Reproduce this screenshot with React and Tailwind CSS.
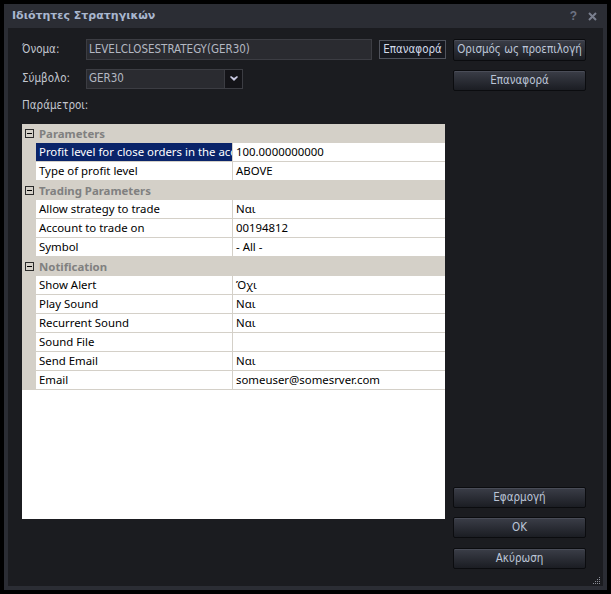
import React from "react";

const dark = { fontFamily: '"DejaVu Sans Condensed", "Liberation Sans", sans-serif', fontSize: "11.5px" };
const grid = { fontFamily: '"Noto Sans", "Open Sans", sans-serif', fontSize: "11.4px" };

function BigButton({ children, className = "" }) {
  return (
    <div
      className={
        "w-[133px] flex items-center justify-center border border-[#0b0c0f] rounded-[2px] bg-gradient-to-b from-[#3b3e48] to-[#1b1d23] text-[#bcc5d7] shadow-[inset_0_1px_0_#4a4d58] whitespace-nowrap " +
        className
      }
      style={dark}
    >
      {children}
    </div>
  );
}

function Minus() {
  return (
    <svg width="9" height="9" viewBox="0 0 9 9" className="block">
      <rect x="0.5" y="0.5" width="8" height="8" fill="none" stroke="#2b2b2b" />
      <line x1="2" y1="4.5" x2="7" y2="4.5" stroke="#000" />
    </svg>
  );
}

function Category({ label }) {
  return (
    <div className="h-[19px] flex items-center bg-[#d4d0c8]">
      <div className="w-[14px] flex justify-center pl-[1px]">
        <Minus />
      </div>
      <div className="pl-[3px] font-bold text-[#808080]">{label}</div>
    </div>
  );
}

function Row({ name, value, selected }) {
  return (
    <div className="h-[19px] flex">
      <div className="w-[14px] bg-[#d4d0c8]" />
      <div
        className={
          "w-[197px] border-r border-b border-[#d4d0c8] pl-[3px] flex items-center overflow-hidden whitespace-nowrap " +
          (selected ? "bg-[#0a246a] text-white" : "text-black")
        }
      >
        {name}
      </div>
      <div className="flex-1 border-b border-[#d4d0c8] pl-[3px] flex items-center whitespace-nowrap text-black">
        {value}
      </div>
    </div>
  );
}

export default function App() {
  return (
    <div className="relative w-[611px] h-[594px] bg-black p-[4px]">
      <div className="h-full bg-[#2b2d34] px-[4px] pb-[4px] flex flex-col">
        <div className="h-[24px] flex items-center pl-[4px] pr-[6px]">
          <div
            className="font-bold text-[#a9b7cf]"
            style={{ fontFamily: '"DejaVu Sans", sans-serif', fontSize: "11px" }}
          >
            Ιδιότητες Στρατηγικών
          </div>
          <div className="ml-auto flex items-center gap-[11px] text-[#6d7282] text-[12px] font-bold" style={{ fontFamily: '"Liberation Sans", sans-serif' }}>
            <span>?</span>
            <svg width="9" height="9" viewBox="0 0 9 9">
              <path d="M1 1 L8 8 M8 1 L1 8" stroke="#7a7f8e" strokeWidth="2" />
            </svg>
          </div>
        </div>
        <div className="flex-1 bg-[#1b1c20] flex pl-[14px] pr-[17px] pt-[11px] pb-[17px]">
          <div className="w-[424px] flex flex-col">
            <div className="h-[21px] flex items-center">
              <div className="w-[64px] text-[#c2c6cf]" style={dark}>Όνομα:</div>
              <div
                className="w-[286px] h-[21px] bg-[#2a2b30] border border-[#3c3d43] flex items-center pl-[2px] text-[#b4b8c2]"
                style={dark}
              >
                LEVELCLOSESTRATEGY(GER30)
              </div>
              <div
                className="ml-[7px] w-[67px] h-[19px] bg-[#171920] border border-[#50535c] flex items-center justify-center text-[#d3dbea] whitespace-nowrap"
                style={dark}
              >
                Επαναφορά
              </div>
            </div>
            <div className="h-[20px] mt-[9px] flex items-center">
              <div className="w-[64px] text-[#c2c6cf]" style={dark}>Σύμβολο:</div>
              <div className="w-[157px] h-[20px] bg-[#2a2b30] border border-[#3c3d43] flex items-center">
                <div className="flex-1 pl-[2px] text-[#b4b8c2]" style={dark}>GER30</div>
                <div className="w-[18px] h-[18px] bg-[#141418] border-l border-[#3c3d43] flex items-center justify-center">
                  <svg width="8" height="6" viewBox="0 0 8 6">
                    <path d="M0 1 L1 0 L4 2 L7 0 L8 1 L4 5 Z" fill="#c9c9e2" />
                  </svg>
                </div>
              </div>
            </div>
            <div className="h-[18px] mt-[8px] flex items-center text-[#c2c6cf]" style={dark}>
              Παράμετροι:
            </div>
            <div className="mt-[9px] w-[423px] h-[395px] bg-white flex flex-col" style={grid}>
              <Category label="Parameters" />
              <Row name="Profit level for close orders in the account" value="100.0000000000" selected />
              <Row name="Type of profit level" value="ABOVE" />
              <Category label="Trading Parameters" />
              <Row name="Allow strategy to trade" value="Ναι" />
              <Row name="Account to trade on" value="00194812" />
              <Row name="Symbol" value="- All -" />
              <Category label="Notification" />
              <Row name="Show Alert" value="Όχι" />
              <Row name="Play Sound" value="Ναι" />
              <Row name="Recurrent Sound" value="Ναι" />
              <Row name="Sound File" value="" />
              <Row name="Send Email" value="Ναι" />
              <Row name="Email" value="someuser@somesrver.com" />
            </div>
          </div>
          <div className="ml-[7px] flex flex-col">
            <BigButton className="h-[22px]">Ορισμός ως προεπιλογή</BigButton>
            <BigButton className="h-[21px] mt-[9px]">Επαναφορά</BigButton>
            <div className="flex-1" />
            <BigButton className="h-[21px]">Εφαρμογή</BigButton>
            <BigButton className="h-[21px] mt-[9px]">OK</BigButton>
            <BigButton className="h-[21px] mt-[10px]">Ακύρωση</BigButton>
          </div>
        </div>
      </div>
      <svg className="absolute left-[592px] top-[576px]" width="9" height="9" viewBox="0 0 9 9">
        {[[7, 1], [5, 3], [7, 3], [3, 5], [5, 5], [7, 5], [1, 7], [3, 7], [5, 7], [7, 7]].map(([x, y], i) => (
          <rect key={i} x={x} y={y} width="1" height="1" fill="#8a8d96" />
        ))}
      </svg>
    </div>
  );
}
